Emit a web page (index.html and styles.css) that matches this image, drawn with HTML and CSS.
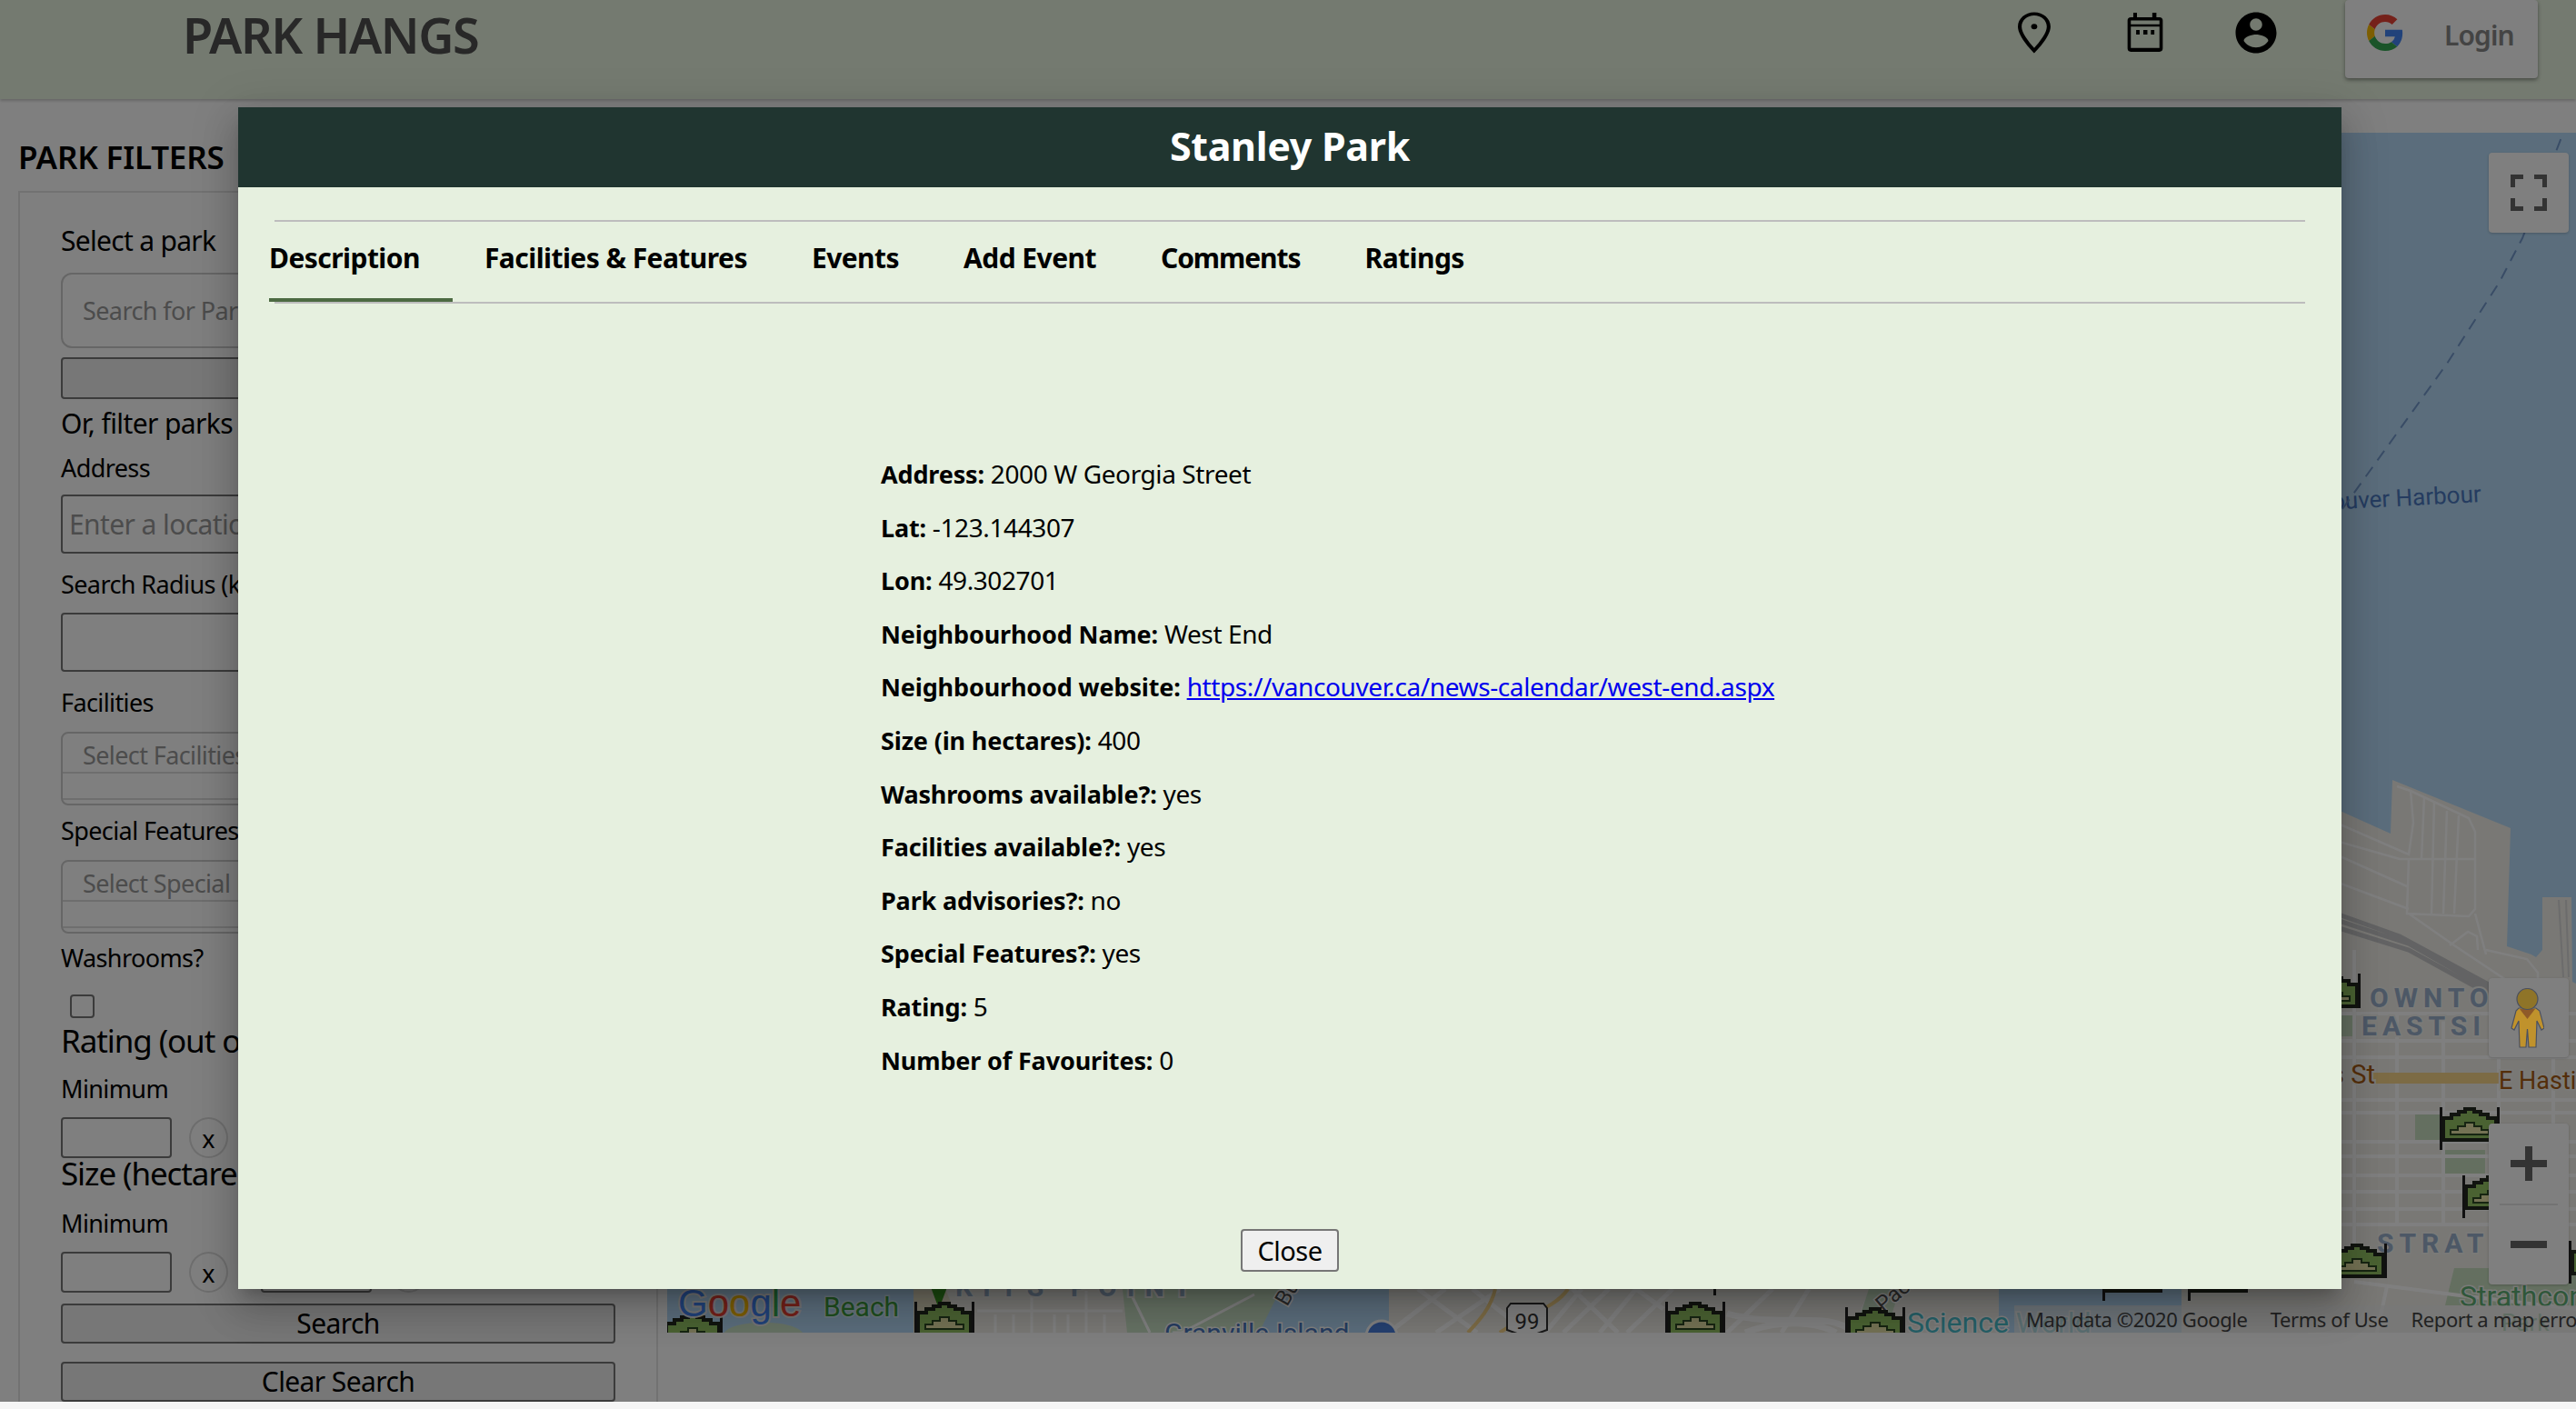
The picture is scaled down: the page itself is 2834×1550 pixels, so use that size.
FILE: index.html
```html
<!DOCTYPE html>
<html lang="en">
<head>
  <meta charset="UTF-8" />
  <title>Park Hangs</title>
  <link rel="stylesheet" href="styles.css">
</head>
<body>
  <div class="page">
    <header class="topbar">
      <h1 class="brand">PARK HANGS</h1>
      <nav class="top-icons">
        <svg class="top-icon" viewBox="0 0 24 24"><g transform="translate(-1.7 0) scale(1.14 1)"><path d="M12 2C8.13 2 5 5.13 5 9c0 5.25 7 13 7 13s7-7.75 7-13c0-3.87-3.13-7-7-7zM6.6 9c0-2.98 2.42-5.4 5.4-5.4s5.4 2.42 5.4 5.4c0 3.1-3 7.4-5.4 10.4C9.6 16.400 6.600 12.100 6.600 9z"/><circle cx="12" cy="9" r="1.3"/></g></svg>
        <svg class="top-icon" viewBox="0 0 24 24"><path fill-rule="evenodd" d="M6.200 2.200H8V4.400H15.500V2.200H17.500V4.400H19C20 4.400 20.600 5 20.600 6V19.700C20.600 20.700 20 21.300 19 21.300H5C4 21.300 3.400 20.700 3.400 19.700V6C3.400 5 4 4.400 5 4.400H6.200ZM5 6V7.900H19V6ZM5 9V19.400H19V9Z"/><path d="M7.600 10.700h1.700v2.200H7.600zm3.500 0h2v2.200h-2zm3.700 0h1.700v2.200h-1.700z"/></svg>
        <svg class="top-icon" viewBox="0 0 24 24"><path d="M12 2C6.48 2 2 6.48 2 12s4.48 10 10 10 10-4.48 10-10S17.52 2 12 2zm0 3c1.66 0 3 1.34 3 3s-1.34 3-3 3-3-1.34-3-3 1.34-3 3-3zm0 14.2c-2.5 0-4.71-1.28-6-3.22.03-1.99 4-3.08 6-3.08 1.99 0 5.97 1.09 6 3.08-1.29 1.94-3.5 3.22-6 3.22z"/></svg>
      </nav>
      <button class="login">
        <svg class="g-logo" viewBox="0 0 48 48">
          <path fill="#EA4335" d="M24 9.5c3.54 0 6.71 1.22 9.21 3.6l6.85-6.85C35.9 2.38 30.47 0 24 0 14.62 0 6.51 5.38 2.56 13.22l7.98 6.19C12.43 13.72 17.74 9.5 24 9.5z"/>
          <path fill="#4285F4" d="M46.98 24.55c0-1.57-.15-3.09-.38-4.55H24v9.02h12.94c-.58 2.96-2.26 5.48-4.78 7.18l7.73 6c4.51-4.18 7.09-10.36 7.09-17.65z"/>
          <path fill="#FBBC05" d="M10.53 28.59c-.48-1.45-.76-2.99-.76-4.59s.27-3.14.76-4.59l-7.98-6.19C.92 16.46 0 20.12 0 24c0 3.88.92 7.54 2.56 10.78l7.97-6.19z"/>
          <path fill="#34A853" d="M24 48c6.48 0 11.93-2.13 15.89-5.81l-7.73-6c-2.15 1.45-4.92 2.3-8.16 2.3-6.26 0-11.57-4.22-13.47-9.91l-7.98 6.19C6.51 42.62 14.62 48 24 48z"/>
        </svg>
        <span>Login</span>
      </button>
    </header>

    <main class="main">
      <aside class="sidebar">
        <h2 class="filters-title">PARK FILTERS</h2>
        <form class="filters">
          <label class="lbl lbl-first">Select a park</label>
          <div class="search-park">Search for Parks</div>
          <select class="park-select"></select>
          <div class="or-filter">Or, filter parks by:</div>
          <label class="lbl lbl-address">Address</label>
          <input class="text-input text-input-a" placeholder="Enter a location">
          <label class="lbl">Search Radius (km)</label>
          <input class="text-input text-input-b">
          <label class="lbl">Facilities</label>
          <div class="multi">
            <div class="multi-top">Select Facilities</div>
            <div class="multi-bottom"></div>
          </div>
          <label class="lbl lbl-special">Special Features</label>
          <div class="multi">
            <div class="multi-top">Select Special Features</div>
            <div class="multi-bottom"></div>
          </div>
          <label class="lbl lbl-wash">Washrooms?</label>
          <input class="check" type="checkbox">
          <div class="range-title range-rating">Rating (out of 5)</div>
          <label class="lbl lbl-min">Minimum</label>
          <div class="range-row">
            <input class="num"><span class="clear-x">x</span>
            <input class="num"><span class="clear-x">x</span>
          </div>
          <div class="range-title">Size (hectares)</div>
          <label class="lbl lbl-min-size">Minimum</label>
          <div class="range-row">
            <input class="num"><span class="clear-x">x</span>
            <input class="num"><span class="clear-x">x</span>
          </div>
          <button class="wide-btn wide-search" type="button">Search</button>
          <button class="wide-btn wide-clear" type="button">Clear Search</button>
        </form>
      </aside>

      <section class="map-wrap">
        <svg class="map" viewBox="734 146 2100 1320">
          <defs>
            <symbol id="park" viewBox="0 0 66 48" overflow="visible">
              <path d="M2 10h9V6h8V3h7V0h14v3h7v3h8v4h9v28H2z" fill="#23291f"/>
              <path d="M6 14h9v-4h8V7h7V4h6v3h7v3h8v4h9v20H6z" fill="#94c464"/>
              <path d="M11 31v-7h8v-4h8v-4h12v4h8v4h8v7z" fill="#2f4a24"/>
              <path d="M13 29v-3h8v-4h8v-4h8v4h8v4h8v3z" fill="#e8e4a8"/>
              <rect x="0" y="0" width="3" height="47" fill="#222"/>
              <rect x="63" y="0" width="3" height="38" fill="#222"/>
            </symbol>
          </defs>
          <rect x="734" y="146" width="2100" height="1320" fill="#b6dbf8"/>

          <!-- downtown side -->
          <path d="M2570 890L2630 917 2632 858 2762 911 2758 1041 2785 1050 2790 1053 2797 1045 2797 987 2829 987 2830 1080 2834 1082V1466H2570Z" fill="#f2f0ea"/>
          <path d="M2637 865L2652 870 2655 905 2650 940 2570 905M2652 870L2716 900 2723 915V945H2640L2570 925M2667 877L2664 945M2678 882L2675 1005M2692 892L2688 1005M2705 897L2700 1005M2723 945V1000L2716 1008 2648 1005 2650 945M2570 940L2648 975M2570 970L2650 1000M2650 1005L2700 1040 2730 1060 2790 1100M2695 1040L2715 1025 2725 1030 2726 1045M2723 1005L2735 1050M2735 1045L2780 1055 2792 1070V1090" fill="none" stroke="#fff" stroke-width="2.500"/>
          <path d="M2570 1005L2640 1030 2760 1095M2570 1020L2650 1045 2750 1100M2570 1012L2650 1038 2755 1098" fill="none" stroke="#c6c7c8" stroke-width="5"/>
          <path d="M2815 990L2820 1075M2823 990L2826 1075" fill="none" stroke="#d8d8d8" stroke-width="2"/>
          <path d="M2657 1226H2684V1255H2657ZM2689 1265H2734V1292H2689ZM2576 1115H2590V1140H2576ZM2700 1395H2834V1436H2690Z" fill="#c8dfc0"/>
          <path d="M2576 1115H2834M2576 1145H2834M2576 1163H2834M2576 1210H2834M2576 1224H2834M2576 1256H2834M2576 1272H2834M2576 1293H2834M2576 1311H2834M2576 1330H2834M2576 1347H2834M2590 1045V1380M2637 1115V1345M2688 1115V1345M2749 1115V1380M2809 1115V1380M2590 1410L2706 1425 2834 1440M2626 1415L2615 1466" fill="none" stroke="#fff" stroke-width="4"/>
          <path d="M2610 1186H2750" stroke="#f8d78a" stroke-width="12"/>

          <!-- bottom strip land -->
          <path d="M1005 1418H1409L1395 1440 1380 1466H1005ZM1528 1418H2199V1466H1528ZM2380 1418H2576V1466H2380Z" fill="#f2f0ea"/>
          <path d="M797 1466C805 1452 870 1450 883 1466ZM1235 1418H1409L1385 1466H1240Z" fill="#cde5c8"/>
          <path d="M1005 1418H1040L1060 1466H1005Z" fill="#e9e3c8"/>
          <path d="M1075 1442H1235M1135 1420V1466M1195 1420V1466M1095 1446V1466M1115 1446V1466M1160 1446V1466M1175 1446V1466M1215 1446V1466M1380 1424L1300 1466M1245 1425L1265 1466" fill="none" stroke="#fff" stroke-width="3"/>
          <path d="M1528 1466L1590 1418M1580 1466L1650 1418M1560 1418L1625 1466M1620 1418L1680 1466M1740 1418L1700 1466M1770 1418L1720 1466M1800 1418L1760 1466M1840 1418L1790 1466M1950 1418L1900 1466M1990 1418L1960 1466M1730 1418L1780 1466M1800 1418L1830 1440" fill="none" stroke="#fff" stroke-width="5"/>
          <path d="M1900 1445C1960 1462 2010 1440 2040 1466M1920 1466C1960 1450 2000 1455 2020 1466M2060 1420L2040 1466" fill="none" stroke="#fff" stroke-width="7"/>
          <path d="M1645 1418C1640 1440 1625 1455 1615 1466M1725 1418C1710 1440 1680 1445 1650 1466" fill="none" stroke="#f8d78a" stroke-width="4"/>
          <path d="M2270 1418H2400V1466H2270Z" fill="#b6dbf8"/>
          <path d="M2056 1418H2090L2075 1466H2040Z" fill="#cde5c8"/>

          <!-- map labels -->
          <text class="water-label" x="2730" y="552" transform="rotate(-3 2730 552)">Vancouver Harbour</text>
          <path d="M2577 560L2692 400 2750 310 2775 262 2820 146" fill="none" stroke="#7298cc" stroke-width="2" stroke-dasharray="13 9"/>
          <text class="district" x="2607" y="1108">OWNTO</text>
          <text class="district" x="2598" y="1139">EASTSI</text>
          <text class="district" x="2615" y="1378">STRAT</text>
          <text class="road-label" x="2564" y="1192">s St</text>
          <text class="road-label road-hastings" x="2749" y="1198">E Hastings</text>
          <text class="green-label" x="2706" y="1437">Strathcona</text>
          <text class="dim-label" x="2752" y="1464">Park</text>
          <text class="kits" x="1051" y="1426">KITS POINT</text>
          <text class="island" x="1281" y="1477">Granville Island</text>
          <circle cx="1520" cy="1470" r="17" fill="#4a80e0" stroke="#fff" stroke-width="3"/>
          <text class="tiny" transform="translate(1416 1438) rotate(-60)">Burr</text>
          <text class="tiny" transform="translate(2072 1444) rotate(-40)">Pacific</text>
          <text class="beach" x="906" y="1448">Beach</text>
          <path d="M1018 1400h30l-15 40z" fill="#3a9a20"/>
          <path d="M1662 1434h36l4 5v24l-22 8-22-8v-24z" fill="#fff" stroke="#333" stroke-width="2"/>
          <text class="shield" x="1680" y="1462">99</text>
          <text class="science" x="2098" y="1466">Science World</text>

          <use href="#park" x="729" y="1444" width="66" height="48"/>
          <use href="#park" x="1006" y="1432" width="66" height="48"/>
          <use href="#park" x="1832" y="1432" width="66" height="48"/>
          <use href="#park" x="2030" y="1438" width="66" height="48"/>
          <use href="#park" x="1885" y="1378" width="66" height="48"/>
          <use href="#park" x="2313" y="1384" width="66" height="48"/>
          <use href="#park" x="2407" y="1384" width="66" height="48"/>
          <use href="#park" x="2531" y="1071" width="66" height="48"/>
          <use href="#park" x="2684" y="1218" width="66" height="48"/>
          <use href="#park" x="2709" y="1293" width="66" height="48"/>
          <use href="#park" x="2560" y="1368" width="66" height="48"/>
          <use href="#park" x="2826" y="1365" width="66" height="48"/>

          <text class="logo-g" x="746" y="1448"><tspan fill="#4285f4">G</tspan><tspan fill="#ea4335">o</tspan><tspan fill="#fbbc05">o</tspan><tspan fill="#4285f4">g</tspan><tspan fill="#34a853">l</tspan><tspan fill="#ea4335">e</tspan></text>
        </svg>

        <div class="map-credits">
          <span>Map data ©2020 Google</span>
          <span>Terms of Use</span>
          <span>Report a map error</span>
        </div>

        <button class="map-ctl ctl-full" type="button">
          <svg viewBox="0 0 40 40"><path d="M0 14V0h14v5H5v9zM26 0h14v14h-5V5h-9zM0 26h5v9h9v5H0zM35 26h5v14H26v-5h9z"/></svg>
        </button>
        <div class="map-ctl ctl-peg"></div>
        <!-- stays bright above the dim layer, like the original -->
        <svg class="peg-fig" viewBox="0 0 37 66"><path d="M9 22h19l4 3 5 19-3 2-5-10-1 29H20l-1.500-20L17 65H10L9 36l-5 10-3-2 5-19z" fill="#c0922c" stroke="#4a5060" stroke-width="1.200"/><path d="M10 23h17l-8.500 11z" fill="#8f5a28"/><circle cx="18.500" cy="12" r="11.500" fill="#8f7428" stroke="#4a5060" stroke-width="1.200"/></svg>
        <div class="map-ctl ctl-zoom">
          <div class="zoom-btn"><svg viewBox="0 0 40 38"><path d="M16 0h8v15h16v8H24v15h-8V23H0v-8h16z"/></svg></div>
          <div class="zoom-sep"></div>
          <div class="zoom-btn"><svg class="zoom-minus" viewBox="0 0 40 8"><path d="M0 0h40v8H0z"/></svg></div>
        </div>
      </section>
    </main>

    <div class="overlay">
      <div class="modal">
        <div class="modal-head">Stanley Park</div>
        <div class="tabs">
          <div class="tab-list">
            <div class="tab tab-active">Description</div>
            <div class="tab">Facilities &amp; Features</div>
            <div class="tab">Events</div>
            <div class="tab">Add Event</div>
            <div class="tab tab-tight">Comments</div>
            <div class="tab">Ratings</div>
          </div>
        </div>
        <div class="details">
          <p><b>Address:</b> 2000 W Georgia Street</p>
          <p><b>Lat:</b> -123.144307</p>
          <p><b>Lon:</b> 49.302701</p>
          <p><b>Neighbourhood Name:</b> West End</p>
          <p><b>Neighbourhood website:</b> <a href="#">https://vancouver.ca/news-calendar/west-end.aspx</a></p>
          <p><b>Size (in hectares):</b> 400</p>
          <p><b>Washrooms available?:</b> yes</p>
          <p><b>Facilities available?:</b> yes</p>
          <p><b>Park advisories?:</b> no</p>
          <p><b>Special Features?:</b> yes</p>
          <p><b>Rating:</b> 5</p>
          <p><b>Number of Favourites:</b> 0</p>
        </div>
        <div class="modal-foot">
          <button class="close-btn" type="button">Close</button>
        </div>
      </div>
    </div>
  </div>
</body>
</html>
```

FILE: styles.css
```css
html, body {
  margin: 0;
  padding: 0;
  height: 100%;
  overflow: hidden;
  background: #f5f5f5;
  font-family: "Noto Sans", sans-serif;
  color: #000;
}

.page {
  position: relative;
  height: 1542px;
  background: #fff;
  overflow: hidden;
}

/* top bar */
.topbar {
  display: flex;
  align-items: flex-start;
  height: 109px;
  background: #e8f4e0;
  box-shadow: 0 2px 3px rgba(0, 0, 0, 0.2);
  position: relative;
}

.brand {
  margin: 12px 0 0 201px;
  font-size: 54px;
  line-height: 52px;
  font-weight: 600;
  color: #505050;
  letter-spacing: -1.4px;
  white-space: nowrap;
}

.top-icons {
  display: flex;
  gap: 68px;
  margin-left: auto;
  margin-top: 9px;
}

.top-icon {
  width: 54px;
  height: 54px;
  display: block;
  fill: #000;
}

.login {
  display: flex;
  align-items: center;
  width: 212px;
  height: 86px;
  margin: 0 42px 0 71px;
  padding: 0 0 0 24px;
  border: none;
  border-radius: 4px;
  background: #fff;
  box-shadow: 0 2px 4px rgba(0, 0, 0, 0.4);
  font-family: "Noto Sans", sans-serif;
  font-size: 30px;
  font-weight: 600;
  color: #888;
}

.g-logo {
  width: 40px;
  height: 40px;
  margin-right: 45px;
  margin-top: -14px;
}

.login span {
  margin-top: -10px;
  letter-spacing: -0.9px;
}

/* left column */
.main {
  display: flex;
  height: 1433px;
}

.sidebar {
  width: 734px;
  flex: none;
  box-sizing: border-box;
}

.filters-title {
  margin: 44px 0 0 20px;
  font-size: 35px;
  line-height: 40px;
  font-weight: 600;
  letter-spacing: -0.2px;
}

.filters {
  display: block;
  box-sizing: border-box;
  width: 704px;
  height: 1400px;
  margin: 17px 0 0 20px;
  padding: 37px 0 0 45px;
  border: 2px solid #e4e4e4;
  border-bottom: none;
}

.lbl {
  display: block;
  height: 32px;
  margin-top: 18px;
  font-size: 27px;
  line-height: 32px;
  white-space: nowrap;
  letter-spacing: -0.6px;
}

.lbl-first { margin-top: 0; font-size: 30px; letter-spacing: -0.7px; }
.lbl-address { margin-top: 17px; }
.lbl-special { margin-top: 12px; }
.lbl-wash { margin-top: 11px; }
.lbl-min { margin-top: 14px; }
.lbl-min-size { margin-top: 16px; }

.search-park {
  box-sizing: border-box;
  width: 610px;
  height: 83px;
  margin-top: 19px;
  padding-left: 22px;
  border: 2px solid #ccc;
  border-radius: 12px;
  font-size: 27px;
  line-height: 79px;
  letter-spacing: -0.6px;
  color: #999;
}

.park-select {
  display: block;
  box-sizing: border-box;
  width: 610px;
  height: 46px;
  margin-top: 10px;
  border: 2px solid #767676;
  border-radius: 4px;
  background: #efefef;
}

.or-filter {
  height: 32px;
  margin-top: 11px;
  font-size: 30px;
  line-height: 32px;
  letter-spacing: -0.6px;
  white-space: nowrap;
}

.text-input {
  display: block;
  box-sizing: border-box;
  width: 610px;
  height: 65px;
  margin-top: 13px;
  padding: 0 7px;
  border: 2px solid #767676;
  border-radius: 4px;
  background: transparent;
  font-family: "Noto Sans", sans-serif;
  font-size: 30px;
  letter-spacing: -0.6px;
}

.text-input-b { margin-top: 15px; }

.text-input::placeholder {
  color: #999;
}

.multi {
  box-sizing: border-box;
  width: 610px;
  height: 81px;
  margin-top: 16px;
  border: 2px solid #ccc;
  border-radius: 8px;
}

.multi-top {
  height: 42px;
  padding-left: 22px;
  border-bottom: 2px solid #ddd;
  font-size: 27px;
  line-height: 48px;
  letter-spacing: -0.6px;
  color: #999;
}

.multi-bottom {
  height: 27px;
  border-bottom: 2px solid #ddd;
}

.check {
  display: block;
  box-sizing: border-box;
  width: 27px;
  height: 26px;
  margin: 24px 0 0 10px;
  appearance: none;
  border: 2px solid #767676;
  border-radius: 4px;
  background: transparent;
}

.range-title {
  height: 40px;
  font-size: 35px;
  line-height: 34px;
  letter-spacing: -1.1px;
  white-space: nowrap;
}

.range-rating { margin-top: 8px; }

.range-row {
  display: flex;
  align-items: center;
  height: 45px;
  margin-top: 15px;
}

.num {
  box-sizing: border-box;
  width: 122px;
  height: 45px;
  border: 2px solid #767676;
  border-radius: 4px;
  background: transparent;
}

.clear-x {
  box-sizing: border-box;
  width: 43px;
  height: 45px;
  margin: 0 36px 0 19px;
  border: 2px solid #ddd;
  border-radius: 50%;
  text-align: center;
  font-size: 27px;
  line-height: 44px;
}

.wide-btn {
  display: block;
  box-sizing: border-box;
  width: 610px;
  height: 44px;
  padding: 0;
  border: 2px solid #767676;
  border-radius: 4px;
  background: #efefef;
  font-family: "Noto Sans", sans-serif;
  font-size: 30px;
  line-height: 38px;
  letter-spacing: -0.6px;
}

.wide-search { margin-top: 12px; }
.wide-clear { margin-top: 20px; }

/* map */
.map-wrap {
  position: relative;
  flex: 1;
  height: 1320px;
  margin-top: 37px;
  overflow: hidden;
  font-family: Roboto, sans-serif;
}

.map {
  display: block;
  width: 2100px;
  height: 1320px;
}

.map text {
  paint-order: stroke;
}

.water-label { font-size: 26px; fill: #4a78c0; text-anchor: end; }
.district { font-size: 30px; font-weight: 700; letter-spacing: 6px; fill: #9ab0cc; stroke: #f4f4f0; stroke-width: 4px; }
.road-label { font-size: 29px; fill: #a85c14; stroke: #f4f4f0; stroke-width: 4px; }
.road-hastings { font-size: 27px; }
.green-label { font-size: 32px; fill: #5fae74; stroke: #f4f4f0; stroke-width: 3px; }
.dim-label { font-size: 26px; fill: #6ab57c; }
.kits { font-size: 30px; font-weight: 700; letter-spacing: 11px; fill: #9ab0cc; stroke: #f4f4f0; stroke-width: 4px; }
.island { font-size: 30px; fill: #4a78c0; stroke: #fff; stroke-width: 3px; }
.tiny { font-size: 24px; fill: #555; stroke: #fff; stroke-width: 3px; }
.beach { font-size: 30px; fill: #3fa040; stroke: #d6ecf8; stroke-width: 3px; }
.shield { font-size: 24px; fill: #333; text-anchor: middle; }
.science { font-size: 32px; fill: #4ac0ce; stroke: #fff; stroke-width: 3px; }
.logo-g { font-family: "Liberation Sans", sans-serif; font-size: 42px; stroke: #e8e8e8; stroke-width: 4px; }

.map-credits {
  position: absolute;
  right: 0;
  bottom: 0;
  display: flex;
  gap: 25px;
  width: 618px;
  height: 30px;
  box-sizing: border-box;
  padding-left: 13px;
  background: rgba(240, 240, 240, 0.65);
  font-family: "Noto Sans", sans-serif;
  font-size: 22px;
  line-height: 30px;
  letter-spacing: -0.4px;
  color: #444;
  white-space: nowrap;
}

.map-ctl {
  position: absolute;
  left: 2004px;
  width: 88px;
  padding: 0;
  border: none;
  border-radius: 4px;
  background: #fff;
  box-shadow: 0 1px 3px rgba(0, 0, 0, 0.2);
}

.map-ctl svg {
  display: block;
  margin: auto;
  fill: #666;
}

.ctl-full { top: 22px; height: 88px; }
.ctl-full svg { width: 40px; height: 40px; }
.ctl-peg { top: 930px; height: 87px; }

.peg-fig {
  position: absolute;
  z-index: 1;
  left: 2028px;
  top: 941px;
  width: 37px;
  height: 66px;
}

.ctl-zoom {
  top: 1090px;
  height: 177px;
  display: flex;
  flex-direction: column;
}

.zoom-btn {
  flex: 1;
  display: flex;
  align-items: center;
}

.zoom-btn svg { width: 40px; height: 38px; }
.zoom-btn .zoom-minus { height: 8px; }

.zoom-sep {
  height: 2px;
  margin: 0 12px;
  background: #e6e6e6;
}

/* dialog */
.overlay {
  position: absolute;
  top: 0;
  left: 0;
  right: 0;
  bottom: 0;
  background: rgba(0, 0, 0, 0.5);
}

.modal {
  position: absolute;
  top: 118px;
  left: 262px;
  width: 2314px;
  height: 1300px;
  display: flex;
  flex-direction: column;
  background: #e6f0df;
  box-shadow: 0 11px 15px -7px rgba(0, 0, 0, 0.2), 0 24px 38px 3px rgba(0, 0, 0, 0.14), 0 9px 46px 8px rgba(0, 0, 0, 0.12);
}

.modal-head {
  height: 88px;
  flex: none;
  background: #203530;
  color: #fff;
  text-align: center;
  font-size: 43px;
  line-height: 86px;
  font-weight: 700;
  letter-spacing: -0.3px;
}

.tabs {
  flex: none;
  height: 88px;
  margin: 36px 40px 0;
  border-top: 2px solid #bdbdbd;
  border-bottom: 2px solid #bdbdbd;
}

.tab-list {
  display: flex;
  gap: 35px;
  height: 90px;
  margin-left: -6px;
}

.tab {
  box-sizing: border-box;
  height: 88px;
  padding-right: 36px;
  font-size: 30px;
  line-height: 80px;
  font-weight: 700;
  letter-spacing: -0.55px;
  white-space: nowrap;
}

.tab-tight {
  letter-spacing: -1.05px;
}

.tab-active {
  border-bottom: 4px solid #4c6a42;
}

.details {
  flex: 1;
  padding: 171px 0 0 707px;
}

.details p {
  height: 32px;
  margin: 0 0 26.6px;
  font-size: 28px;
  line-height: 32px;
  letter-spacing: -0.4px;
  white-space: nowrap;
}

.details b {
  font-size: 27px;
  font-weight: 700;
  letter-spacing: -0.15px;
}

.details a {
  color: #0000ee;
}

.modal-foot {
  flex: none;
  display: flex;
  justify-content: center;
  padding-bottom: 19px;
}

.close-btn {
  box-sizing: border-box;
  width: 108px;
  height: 47px;
  padding: 0;
  border: 2px solid #767676;
  border-radius: 4px;
  background: #efefef;
  font-family: "Noto Sans", sans-serif;
  font-size: 29px;
  letter-spacing: -0.5px;
}
```
